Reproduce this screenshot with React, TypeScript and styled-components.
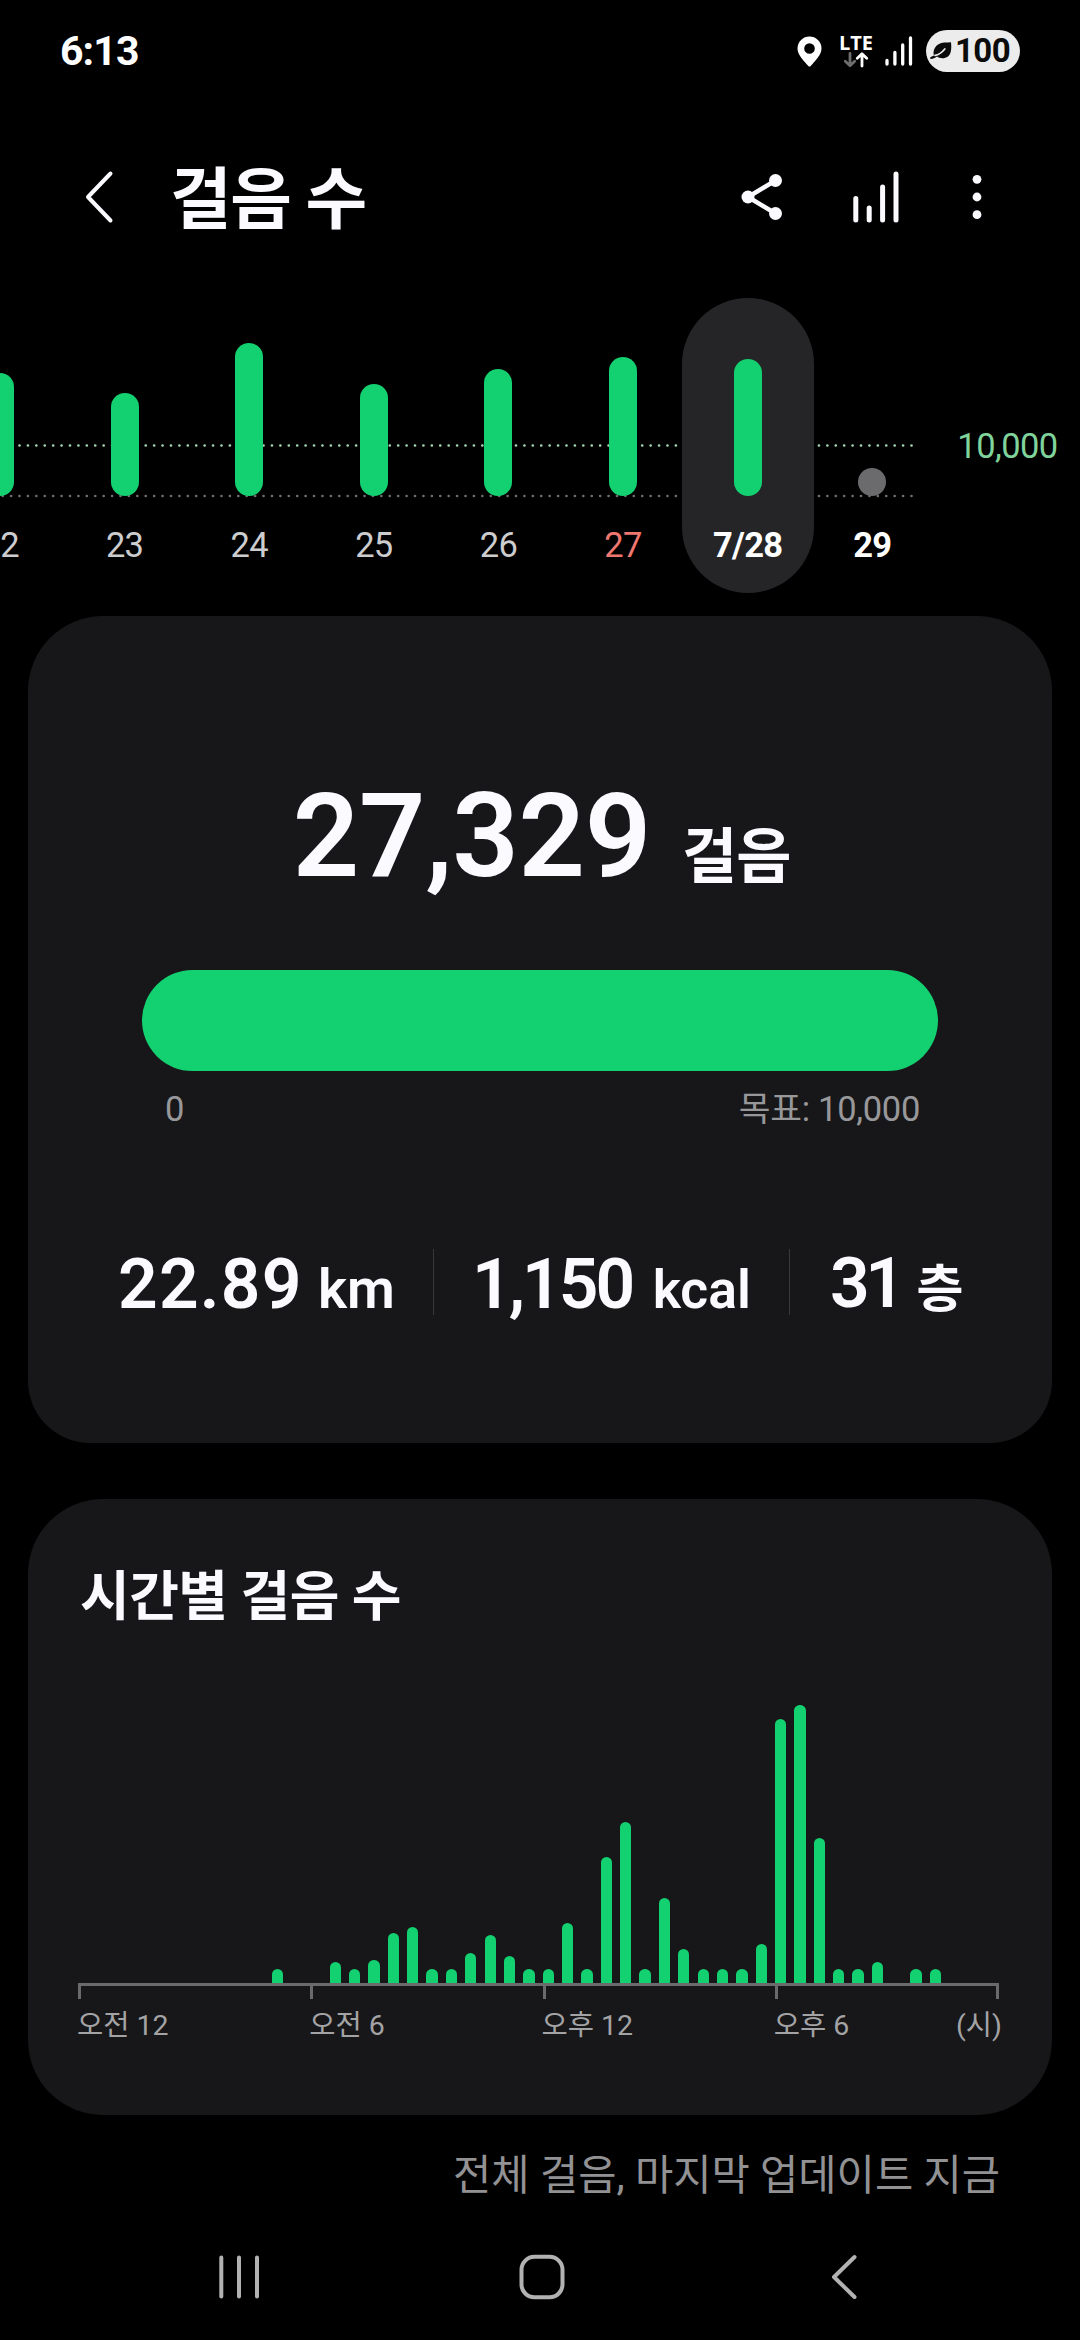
import React from "react";
import styled, { createGlobalStyle } from "styled-components";

const GREEN = "#13d170";
const SURFACE = "#171719";

const GlobalStyle = createGlobalStyle`
  html, body { margin: 0; background: #000; }
  * { box-sizing: border-box; }
  svg { display: block; flex: none; }
`;

const Screen = styled.main`
  width: 1080px;
  height: 2340px;
  overflow: hidden;
  display: flex;
  flex-direction: column;
  background: #000;
  color: #fafaff;
  font-family: Roboto, "Noto Sans CJK KR", sans-serif;
  white-space: nowrap;
`;

/* ---------- status bar ---------- */

const StatusBar = styled.header`
  height: 102px;
  flex: none;
  display: flex;
  justify-content: space-between;
  align-items: center;
  padding: 0 60px 0 60px;
`;

const Clock = styled.time`
  font-size: 41px;
  font-weight: 700;
  line-height: 48px;
  letter-spacing: -0.9px;
  color: #fff;
`;

const StatusIcons = styled.div`
  display: flex;
  align-items: center;
`;

const Network = styled.div`
  display: flex;
  flex-direction: column;
  align-items: center;
  width: 34px;
  height: 34px;
  margin: 0 12px 0 17px;
`;

const NetworkLabel = styled.span`
  font-family: "Open Sans", sans-serif;
  font-size: 20px;
  font-weight: 700;
  line-height: 18px;
  color: #fff;
`;

const Battery = styled.div`
  width: 94px;
  height: 42px;
  margin-left: 13px;
  padding: 0 10px 0 4px;
  border-radius: 21px;
  display: flex;
  align-items: center;
  justify-content: space-between;
  background: #ececec;
`;

const BatteryLevel = styled.span`
  font-size: 33px;
  font-weight: 700;
  line-height: 42px;
  letter-spacing: -0.6px;
  color: #0b0b0b;
`;

/* ---------- title bar ---------- */

const TitleBar = styled.nav`
  height: 190px;
  flex: none;
  display: flex;
  align-items: center;
  padding: 0 98px 0 84px;
`;

const PageTitle = styled.h1`
  margin: 0 auto 0 54px;
  padding-top: 5px;
  font-size: 67px;
  font-weight: 700;
  line-height: 80px;
  letter-spacing: -1.5px;
`;

const Actions = styled.div`
  display: flex;
  align-items: center;
  height: 60px;
`;

const ActionGap = styled.span<{ $w: number }>`
  width: ${(p) => p.$w}px;
`;

/* ---------- daily trend ---------- */

const Trend = styled.section`
  position: relative;
  height: 324px;
  flex: none;
`;

const TrendLines = styled.svg`
  position: absolute;
  left: 0;
  top: 0;
`;

const Days = styled.div`
  position: relative;
  display: flex;
  margin-left: -66px;
  padding-top: 6px;
`;

const Day = styled.div<{ $selected?: boolean }>`
  position: relative;
  width: 132px;
  height: 295px;
  margin-right: -7.4px;
  flex: none;
  display: flex;
  flex-direction: column;
  align-items: center;
  justify-content: flex-end;
  border-radius: 66px;
  background: ${(p) => (p.$selected ? "#252527" : "transparent")};
`;

const DayBar = styled.div<{ $h: number; $empty?: boolean }>`
  width: 28px;
  height: ${(p) => p.$h}px;
  border-radius: 14px;
  background: ${(p) => (p.$empty ? "#6b6b6d" : GREEN)};
`;

const DayLabel = styled.span<{ $color: string; $bold?: boolean; $indent?: number }>`
  height: 40px;
  margin: 29px 0 28px;
  padding-left: ${(p) => p.$indent ?? 0}px;
  font-size: 34.5px;
  font-weight: ${(p) => (p.$bold ? 700 : 400)};
  line-height: 40px;
  letter-spacing: -0.7px;
  color: ${(p) => p.$color};
`;

const GoalTag = styled.span`
  position: absolute;
  right: 22.5px;
  top: 134px;
  font-size: 34.5px;
  line-height: 40px;
  letter-spacing: -0.6px;
  color: #7fd39b;
`;

/* ---------- cards ---------- */

const Card = styled.section<{ $h: number; $mb: number; $bottom: number }>`
  height: ${(p) => p.$h}px;
  margin: 0 28px ${(p) => p.$mb}px;
  flex: none;
  display: flex;
  flex-direction: column;
  border-radius: 75px 75px ${(p) => p.$bottom}px ${(p) => p.$bottom}px;
  background: ${SURFACE};
`;

const Total = styled.div`
  display: flex;
  justify-content: center;
  align-items: baseline;
  padding: 150px 0 0 3px;
  height: 354px;
`;

const TotalValue = styled.strong`
  font-size: 116.5px;
  font-weight: 600;
  line-height: 140px;
  letter-spacing: -0.3px;
`;

const TotalUnit = styled.span`
  margin-left: 31px;
  font-size: 60px;
  font-weight: 700;
  letter-spacing: -1px;
  line-height: 140px;
  transform: translateY(2px);
`;

const Progress = styled.div`
  height: 101px;
  margin: 0 114px;
  border-radius: 51px;
  background: ${GREEN};
`;

const ProgressScale = styled.div`
  display: flex;
  justify-content: space-between;
  margin: 18px 132px 0 137px;
  font-size: 34.5px;
  line-height: 40px;
  letter-spacing: -0.3px;
  color: #98989b;
`;

const Stats = styled.div`
  display: flex;
  align-items: center;
  height: 68px;
  margin: 119px 72px 0 90px;
`;

const Stat = styled.div<{ $w: number }>`
  width: ${(p) => p.$w}px;
  flex: none;
  display: flex;
  align-items: baseline;
  padding-top: 10px;
  line-height: 68px;
`;

const StatValue = styled.strong<{ $ls: number }>`
  font-size: 69.5px;
  font-weight: 600;
  letter-spacing: ${(p) => p.$ls}px;
`;

const StatUnit = styled.span<{ $size: number; $gap: number }>`
  margin-left: ${(p) => p.$gap}px;
  font-size: ${(p) => p.$size}px;
  font-weight: 600;
`;

const Divider = styled.span<{ $after: number }>`
  width: 1px;
  height: 66px;
  flex: none;
  margin-right: ${(p) => p.$after}px;
  background: #38383b;
`;

/* ---------- hourly chart ---------- */

const CardTitle = styled.h2`
  margin: 67px 0 0 52px;
  font-size: 54px;
  font-weight: 700;
  line-height: 64px;
  letter-spacing: -0.5px;
`;

const Plot = styled.div`
  display: flex;
  justify-content: space-between;
  align-items: flex-end;
  height: 353px;
  margin: 0 52.6px 0 50px;
`;

const HourBar = styled.div<{ $h: number }>`
  width: 11.3px;
  height: ${(p) => p.$h}px;
  border-radius: 5.6px 5.6px 0 0;
  background: ${GREEN};
`;

const Axis = styled.div`
  display: flex;
  height: 16px;
  margin: 0 52.6px 0 50px;
  border-top: 3px solid #6a6a6c;
  border-right: 3px solid #6a6a6c;
`;

const AxisSpan = styled.div<{ $last?: boolean }>`
  width: 232.4px;
  flex: ${(p) => (p.$last ? "1 1 0" : "none")};
  border-left: 3px solid #6a6a6c;
`;

const AxisLabels = styled.div`
  display: flex;
  margin: 7px 50px 0 49px;
  font-size: 28.5px;
  line-height: 40px;
  color: #a3a3a5;
`;

const AxisLabel = styled.span`
  width: 232.4px;
`;

const AxisUnit = styled.span`
  margin-left: -50px;
`;

const Updated = styled.p`
  margin: 0;
  padding: 33px 80px 0 0;
  height: 100px;
  flex: none;
  font-size: 41.6px;
  line-height: 56px;
  text-align: right;
  color: #929295;
`;

/* ---------- system navigation ---------- */

const SystemNav = styled.footer`
  display: flex;
  justify-content: space-between;
  align-items: center;
  margin-top: 38px;
  height: 48px;
  padding: 0 222px 0 218px;
`;

const HomeKey = styled.svg`
  margin-right: 7px;
`;

type DayData = {
  label: string;
  h: number;
  color?: string;
  bold?: boolean;
  selected?: boolean;
  empty?: boolean;
  indent?: number;
};

const DAYS: DayData[] = [
  { label: "2", h: 123, indent: 19 },
  { label: "23", h: 103 },
  { label: "24", h: 153.5 },
  { label: "25", h: 112 },
  { label: "26", h: 127 },
  { label: "27", h: 139, color: "#f0776f" },
  { label: "7/28", h: 137.5, color: "#fff", bold: true, selected: true },
  { label: "29", h: 28, color: "#fff", bold: true, empty: true },
];

const HOURS = [
  0, 0, 0, 0, 0, 0, 0, 0, 0, 0, 14, 0,
  0, 21, 14, 23, 50, 56, 14, 14, 30, 48, 27.5, 14,
  14, 60, 14, 126, 161.3, 14, 85, 34, 14, 14, 14, 39,
  264, 278, 145, 14, 14, 21, 0, 14, 14, 0, 0, 0,
];

export default function App() {
  return (
    <Screen>
      <GlobalStyle />
      <StatusBar>
        <Clock>6:13</Clock>
        <StatusIcons>
          <svg width="25" height="31" viewBox="0 0 25 31">
            <path
              fill="#fff"
              fillRule="evenodd"
              d="M12.5 .5A12 12 0 0 0 .5 12.4C.5 19.500 7.500 25 11.300 30Q12.500 31 13.700 30C17.500 25 24.500 19.500 24.500 12.400A12 12 0 0 0 12.500 .5ZM12.500 7.200A5.300 5.300 0 1 1 12.500 17.800A5.300 5.300 0 0 1 12.500 7.200Z"
            />
          </svg>
          <Network>
            <NetworkLabel>LTE</NetworkLabel>
            <svg width="26" height="16" viewBox="0 0 26 16" fill="none" strokeWidth="2.8" strokeLinecap="round" strokeLinejoin="round">
              <path stroke="#6e6e6e" d="M7 1.500V13.500M2.300 9.300L7 13.700L11.700 9.300" />
              <path stroke="#fff" d="M19 14V2M14.300 6.200L19 1.800L23.700 6.200" />
            </svg>
          </Network>
          <svg width="28" height="32" viewBox="0 0 28 32" stroke="#fff" strokeWidth="3.300" strokeLinecap="round">
            <path d="M2 25.500V29M9.900 17.500V29M17.700 10V29M25.500 3V29" />
          </svg>
          <Battery>
            <svg width="22" height="18" viewBox="0 0 22 18">
              <path
                fill="#0b0b0b"
                d="M21 .3C21.600 6 21.500 11.500 18 14.500C14.500 17 9.500 16.600 7 14.600C5 16 3 17 1 17C-.2 16.900-.2 15.300 .8 15L4 13.600C2.500 9.500 4.500 4.500 8.500 2.200C12 .3 16.500 .6 21 .3Z"
              />
              <path stroke="#ececec" strokeWidth="1.700" strokeLinecap="round" fill="none" d="M5 13.300C9 12.800 12 10.500 14.800 7" />
            </svg>
            <BatteryLevel>100</BatteryLevel>
          </Battery>
        </StatusIcons>
      </StatusBar>

      <TitleBar>
        <svg width="32" height="56" viewBox="0 0 32 56" fill="none" stroke="#fafaff" strokeWidth="4" strokeLinecap="round" strokeLinejoin="round">
          <path d="M26.500 4.500L4 28L26.500 51.500" />
        </svg>
        <PageTitle>걸음 수</PageTitle>
        <Actions>
          <svg width="42" height="48" viewBox="0 0 42 48" fill="#fafaff">
            <path d="M34.500 7.500L7 24L34.500 40.500" fill="none" stroke="#fafaff" strokeWidth="4.500" />
            <circle cx="7" cy="24" r="6.500" />
            <circle cx="34.500" cy="7.500" r="6.500" />
            <circle cx="34.500" cy="40.500" r="6.500" />
          </svg>
          <ActionGap $w={70} />
          <svg width="46" height="54" viewBox="0 0 46 54" stroke="#fafaff" strokeWidth="5" strokeLinecap="round">
            <path d="M2.800 28.500V50M16.200 38V50M29.600 17V50M43 4V50" />
          </svg>
          <ActionGap $w={73} />
          <svg width="10" height="46" viewBox="0 0 10 46" fill="#fafaff">
            <circle cx="5" cy="5.300" r="4.400" />
            <circle cx="5" cy="23" r="4.400" />
            <circle cx="5" cy="40.700" r="4.400" />
          </svg>
        </Actions>
      </TitleBar>

      <Trend>
        <TrendLines width="1080" height="324" fill="none" strokeWidth="2.700" strokeLinecap="round" strokeDasharray="0 8.415">
          <path d="M911.500 153.500H0" stroke="#a5d8ae" />
          <path d="M911.500 204H0" stroke="#6e6e6e" />
        </TrendLines>
        <Days>
          {DAYS.map((d) => (
            <Day key={d.label} $selected={d.selected}>
              <DayBar $h={d.h} $empty={d.empty} />
              <DayLabel $color={d.color ?? "#cdcdcf"} $bold={d.bold} $indent={d.indent}>
                {d.label}
              </DayLabel>
            </Day>
          ))}
        </Days>
        <GoalTag>10,000</GoalTag>
      </Trend>

      <Card $h={827} $mb={56} $bottom={62}>
        <Total>
          <TotalValue>27,329</TotalValue>
          <TotalUnit>걸음</TotalUnit>
        </Total>
        <Progress />
        <ProgressScale>
          <span>0</span>
          <span>목표: 10,000</span>
        </ProgressScale>
        <Stats>
          <Stat $w={315}>
            <StatValue $ls={1.2}>22.89</StatValue>
            <StatUnit $size={55} $gap={15.5}>km</StatUnit>
          </Stat>
          <Divider $after={38} />
          <Stat $w={317}>
            <StatValue $ls={-3}>1,150</StatValue>
            <StatUnit $size={53.5} $gap={20.5}>kcal</StatUnit>
          </Stat>
          <Divider $after={40} />
          <Stat $w={140}>
            <StatValue $ls={-4.5}>31</StatValue>
            <StatUnit $size={51} $gap={16}>층</StatUnit>
          </Stat>
        </Stats>
      </Card>

      <Card $h={616} $mb={0} $bottom={75}>
        <CardTitle>시간별 걸음 수</CardTitle>
        <Plot>
          {HOURS.map((h, i) => (
            <HourBar key={i} $h={h} />
          ))}
        </Plot>
        <Axis>
          <AxisSpan />
          <AxisSpan />
          <AxisSpan />
          <AxisSpan $last />
        </Axis>
        <AxisLabels>
          <AxisLabel>오전 12</AxisLabel>
          <AxisLabel>오전 6</AxisLabel>
          <AxisLabel>오후 12</AxisLabel>
          <AxisLabel>오후 6</AxisLabel>
          <AxisUnit>(시)</AxisUnit>
        </AxisLabels>
      </Card>

      <Updated>전체 걸음, 마지막 업데이트 지금</Updated>

      <SystemNav>
        <svg width="42" height="46" viewBox="0 0 42 46" stroke="#b2b2b2" strokeWidth="4" strokeLinecap="round">
          <path d="M3.300 3.500V42.500M21 3.500V42.500M39 3.500V42.500" />
        </svg>
        <HomeKey width="46" height="46" viewBox="0 0 46 46" fill="none" stroke="#b2b2b2" strokeWidth="4">
          <rect x="2.500" y="2.800" width="41" height="40.500" rx="13" />
        </HomeKey>
        <svg width="28" height="46" viewBox="0 0 28 46" fill="none" stroke="#b2b2b2" strokeWidth="4" strokeLinecap="round" strokeLinejoin="round">
          <path d="M24.500 3L4 23L24.500 43" />
        </svg>
      </SystemNav>
    </Screen>
  );
}
